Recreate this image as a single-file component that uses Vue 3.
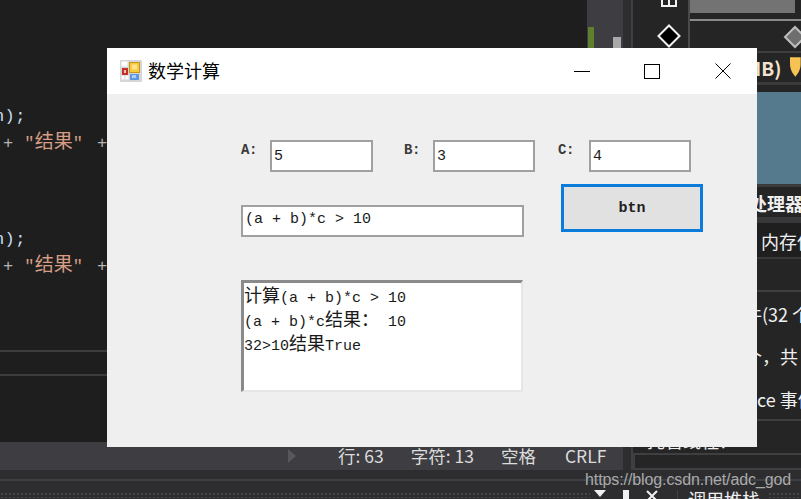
<script setup>
const codeLines = [
  { id: 1, kind: 'comma' },
  { id: 2 }, { id: 3 }, { id: 4 }, { id: 5 },
  { id: 6, kind: 'end' },
  { id: 7, kind: 'result' },
  { id: 8 }, { id: 9 }, { id: 10 },
  { id: 11, kind: 'end' },
  { id: 12, kind: 'result' }
]
const numbers = [
  { name: 'A:', value: '5', cls: 'field-a' },
  { name: 'B:', value: '3', cls: 'field-b' },
  { name: 'C:', value: '4', cls: 'field-c' }
]
</script>

<template>
  <div class="desktop">
    <div class="ide">
      <div class="work">
        <div class="center">
          <div class="upper">
            <div class="editor">
              <div class="code">
                <div v-for="line in codeLines" :key="line.id" class="code-line">
                  <template v-if="line.kind === 'comma'"><span class="punct first">        ,</span></template>
                  <template v-else-if="line.kind === 'end'"><span class="punct end">n);</span></template>
                  <template v-else-if="line.kind === 'result'"><span class="op">+ </span><span class="str">"<span class="str-cjk">结果</span>"</span><span class="op op-last"> +</span></template>
                </div>
              </div>
              <div class="panel-strip"></div>
            </div>
            <div class="scroll">
              <span class="mark-green"></span>
              <span class="mark-grey"></span>
            </div>
          </div>
          <div class="status">
            <svg class="status-arrow" width="8" height="14" viewBox="0 0 8 14"><path d="M0 0L8 7L0 14Z" fill="#58585c"/></svg>
            <span class="st st-line">行: 63</span>
            <span class="st st-char">字符: 13</span>
            <span class="st st-space">空格</span>
            <span class="st st-crlf">CRLF</span>
          </div>
        </div>
        <div class="gutter"></div>
        <div class="side">
          <div class="tool-row">
            <div class="tool-icons">
              <svg class="glyph-split" width="16" height="7" viewBox="0 0 16 7"><path d="M1 0V6H15V0M8 0V6" fill="none" stroke="#f2f2f2" stroke-width="2"/></svg>
              <svg class="glyph-diamond" width="24" height="24" viewBox="0 0 24 24"><path d="M12 1.500L22.500 12L12 22.500L1.500 12Z" fill="#000" stroke="#f2f2f2" stroke-width="2"/></svg>
            </div>
            <div class="tool-main">
              <div class="grey-bar"></div>
              <div class="grey-line"></div>
              <svg class="glyph-grey" width="24" height="24" viewBox="0 0 24 24"><path d="M12 2L22 12L12 22L2 12Z" fill="#6e6e6e" stroke="#bdbdbd" stroke-width="2"/></svg>
            </div>
          </div>
          <div class="row-mem">
            <span class="mem-text">MB)</span>
            <svg class="marker" width="11" height="20" viewBox="0 0 11 20"><path d="M0 0H11V7C11 13 8 17 5.500 20C3 17 0 13 0 7Z" fill="#f6c253"/></svg>
          </div>
          <div class="chart"></div>
          <div class="row-heading">处理器</div>
          <div class="row-tab">内存使用</div>
          <div class="row-blank"></div>
          <div class="events">
            <div class="ev ev-1">事件(32 个</div>
            <div class="ev ev-2">个，共</div>
            <div class="ev ev-3">ce 事件</div>
          </div>
          <div class="hidden-row">托管线程？</div>
          <div class="box-row"></div>
        </div>
      </div>
      <div class="bottom">
        <div class="grip"></div>
        <div class="pane-tools">
          <svg width="12" height="8" viewBox="0 0 12 8"><path d="M0 0H12L6 7Z" fill="#f0f0f0"/></svg>
          <svg width="10" height="14" viewBox="0 0 10 14"><path d="M2 0H8V9H10V10H0V9H2ZM4 10V14H6V10" fill="#f0f0f0"/></svg>
          <svg width="12" height="12" viewBox="0 0 12 12"><path d="M1 1L11 11M11 1L1 11" stroke="#f0f0f0" stroke-width="2"/></svg>
        </div>
        <div class="pane-tab">调用堆栈</div>
        <div class="grip grip-end"></div>
      </div>
    </div>

    <div class="window">
      <div class="titlebar">
        <svg class="app-icon" width="22" height="22" viewBox="0 0 22 22">
          <rect width="22" height="22" rx="1" fill="#d6d6d6"/>
          <rect x="1.500" y="1.500" width="6" height="5" fill="#fff"/>
          <rect x="1.500" y="15.500" width="3" height="4" fill="#fff"/>
          <rect x="5.500" y="15.500" width="3" height="4" fill="#fff"/>
          <rect x="2" y="8" width="6" height="7" fill="#c4302b"/>
          <rect x="4" y="10" width="2" height="3" fill="#f2c4b0"/>
          <rect x="9.500" y="2.500" width="10" height="10" fill="#f7c93c" stroke="#c39a1f"/>
          <rect x="12" y="4.500" width="5" height="5" fill="#fbe48d"/>
          <rect x="10" y="14" width="9" height="6" fill="#5f98e0"/>
          <rect x="12" y="15" width="4" height="3" fill="#a9cdf4"/>
        </svg>
        <span class="title">数学计算</span>
        <div class="win-buttons">
          <span class="win-btn win-min"><svg width="16" height="16" viewBox="0 0 16 16"><path d="M0 8.500H16" stroke="#000"/></svg></span>
          <span class="win-btn"><svg width="16" height="16" viewBox="0 0 16 16"><rect x="0.500" y="1.500" width="15" height="14" fill="none" stroke="#000"/></svg></span>
          <span class="win-btn"><svg width="16" height="16" viewBox="0 0 16 16"><path d="M0.500 0.500L15.500 15.500M15.500 0.500L0.500 15.500" stroke="#000"/></svg></span>
        </div>
      </div>
      <div class="client">
        <div class="number-row">
          <div v-for="n in numbers" :key="n.name" class="field" :class="n.cls">
            <label class="field-label">{{ n.name }}</label>
            <input class="box num" :value="n.value" readonly />
          </div>
        </div>
        <div class="form-body">
          <div class="form-left">
            <input class="box expr" value="(a + b)*c > 10" readonly />
            <div class="output">
              <div class="out-line"><span class="cjk">计算</span>(a + b)*c &gt; 10</div>
              <div class="out-line">(a + b)*c<span class="cjk">结果：</span> 10</div>
              <div class="out-line">32&gt;10<span class="cjk">结果</span>True</div>
            </div>
          </div>
          <button class="btn" type="button">btn</button>
        </div>
      </div>
    </div>

    <div class="watermark">https://blog.csdn.net/adc_god</div>
  </div>
</template>

<style>
html, body { margin: 0; background: #2d2d30; }
</style>

<style scoped>
.desktop {
  position: relative;
  width: 801px;
  height: 499px;
  overflow: hidden;
  background: #2d2d30;
  font-family: "Noto Sans CJK SC", "Noto Sans", sans-serif;
}
.ide { display: flex; flex-direction: column; height: 499px; }
.work { display: flex; height: 470px; }
.center { width: 623px; display: flex; flex-direction: column; }
.upper { display: flex; height: 442px; }
.editor { width: 587px; background: #1e1e1e; display: flex; flex-direction: column; }
.code {
  height: 350px;
  overflow: hidden;
  font-family: "Liberation Mono", monospace;
  font-size: 17px;
  letter-spacing: 0.4px;
  white-space: pre;
  padding-left: 3px;
  box-sizing: border-box;
}
.code-line { height: 24.6px; line-height: 24.6px; }
.code-line:first-child { margin-top: -16px; }
.first { margin-left: -5px; position: relative; top: -4px; }
.punct { color: #dcdcdc; }
.end { margin-left: -9px; color: #c8dce8; position: relative; top: -2px; }
.op { color: #b4b4b4; }
.op-last { margin-left: 3px; }
.str { color: #d69d85; }
.str-cjk { font-family: "Noto Sans CJK SC", sans-serif; font-size: 19px; line-height: 0; letter-spacing: 0; }
.panel-strip {
  height: 22px;
  border-top: 2px solid #3c3c3c;
  border-bottom: 2px solid #3c3c3c;
}
.scroll {
  width: 36px;
  background: #3e3e42;
  position: relative;
}
.mark-green { position: absolute; left: 1px; top: 27px; width: 6px; height: 21px; background: #5f7f2c; }
.mark-grey { position: absolute; left: 26px; top: 37px; width: 8px; height: 11px; background: #a8a8a8; }
.status {
  height: 28px;
  background: #3e3e42;
  display: flex;
  align-items: center;
  color: #dcdcdc;
  font-size: 17.5px;
  position: relative;
}
.status-arrow { margin-left: 288px; }
.st { white-space: nowrap; line-height: 28px; }
.st-line { margin-left: 42px; }
.st-char { margin-left: 27px; }
.st-space { margin-left: 27px; }
.st-crlf { margin-left: 29px; }
.gutter { background: #2d2d30; border-right: 2px solid #3f3f42; width: 8px; }
.side {
  width: 168px;
  background: #252526;
  display: flex;
  flex-direction: column;
  color: #f0f0f0;
  overflow: hidden;
}
.tool-row { display: flex; height: 52px; border-bottom: 2px solid #3f3f42; }
.tool-icons {
  width: 55px;
  border-right: 2px solid #4a4a4d;
  display: flex;
  flex-direction: column;
  align-items: center;
}
.glyph-split { margin-left: 16px; }
.glyph-diamond { margin-top: 17px; margin-left: 16px; }
.tool-main { flex: 1; position: relative; }
.grey-bar { height: 13px; width: 105px; background: #737373; }
.grey-line { height: 2px; margin-top: 6px; background: #8a8a8a; }
.glyph-grey { position: absolute; left: 93px; top: 25px; }
.row-mem {
  box-sizing: content-box;
  height: 28px;
  border-bottom: 3px solid #3a3a3d;
  display: flex;
  align-items: center;
  padding-left: 112px;
  padding-bottom: 1px;
  font-size: 19px;
  font-weight: 700;
  white-space: nowrap;
  color: #f0e4d0;
}
.marker { margin-left: 9px; }
.chart { height: 92px; margin-top: 7px; margin-left: 122px; background: #557a8d; flex: none; }
.row-heading {
  height: 30px;
  line-height: 32px;
  border-top: 3px solid #3a3a3d;
  padding-left: 116px;
  font-size: 18px;
  font-weight: 700;
  white-space: nowrap;
  flex: none;
}
.row-tab {
  height: 34px;
  line-height: 36px;
  border-top: 6px solid #38383a;
  border-bottom: 2px solid #38383a;
  padding-left: 128px;
  font-size: 18px;
  white-space: nowrap;
  flex: none;
  background: #1f1f20;
}
.row-blank { height: 31px; border-bottom: 2px solid #3f3f42; flex: none; }
.events {
  height: 127px;
  border-bottom: 2px solid #3f3f42;
  flex: none;
  font-size: 18px;
  white-space: nowrap;
}
.ev { height: 42px; line-height: 42px; }
.ev-1 { padding-left: 93px; margin-top: 1px; }
.ev-2 { padding-left: 111px; }
.ev-3 { padding-left: 124px; line-height: 45px; }
.hidden-row { height: 32px; line-height: 38px; padding-left: 14px; font-size: 18px; white-space: nowrap; flex: none; border-bottom: 2px solid #3f3f42; }
.box-row { height: 13px; border-bottom: 2px solid #3f3f42; border-left: 2px solid #3f3f42; flex: none; }
.bottom {
  height: 29px;
  background: #2d2d30;
  position: relative;
  display: flex;
  align-items: flex-end;
  overflow: hidden;
}
.bottom::before {
  content: "";
  position: absolute;
  left: 0;
  right: 0;
  top: 9px;
  height: 2px;
  background: #3f3f46;
}
.grip {
  width: 590px;
  height: 6px;
  margin-bottom: 1px;
  background-image: radial-gradient(#48484c 1px, transparent 1px);
  background-size: 4px 4px;
}
.pane-tools {
  width: 88px;
  height: 12px;
  display: flex;
  gap: 15px;
  align-items: flex-start;
  padding-left: 4px;
  box-sizing: border-box;
  border-right: 1px solid #3f3f46;
  margin-bottom: -3px;
}
.pane-tab {
  margin-left: 10px;
  color: #f0f0f0;
  font-size: 18px;
  line-height: 18px;
  margin-bottom: -9px;
  white-space: nowrap;
}
.grip-end { flex: 1; width: auto; margin-left: 8px; }

.window {
  position: absolute;
  left: 107px;
  top: 48px;
  width: 650px;
  height: 399px;
  background: #efefef;
  display: flex;
  flex-direction: column;
}
.titlebar {
  height: 46px;
  background: #fff;
  display: flex;
  align-items: center;
  padding-left: 13px;
  flex: none;
}
.title { margin-left: 6px; margin-bottom: 2px; font-size: 18px; color: #000; line-height: 44px; }
.win-buttons { margin-left: auto; margin-right: -1px; display: flex; }
.win-btn { width: 71px; height: 46px; display: flex; align-items: center; justify-content: center; }
.win-min svg { margin-left: 3px; }
.client { padding: 46px 0 0 134px; }
.number-row { display: flex; height: 32px; }
.field { display: flex; }
.field-label {
  font-family: "Liberation Mono", monospace;
  font-size: 14px;
  font-weight: 700;
  color: #3a3a3a;
  line-height: 21px;
  letter-spacing: -0.5px;
}
.field-a .field-label { width: 29px; }
.field-b { margin-left: 31px; }
.field-b .field-label { width: 29px; }
.field-c { margin-left: 23px; }
.field-c .field-label { width: 31px; }
.box {
  box-sizing: border-box;
  background: #fff;
  border: 2px solid #a0a0a0;
  border-radius: 0;
  padding: 0 0 0 2px;
  outline: none;
  margin: 0;
  font-family: "Liberation Mono", monospace;
  font-size: 15px;
  color: #1a1a1a;
}
.num { width: 102px; height: 32px; }
.field-a .num { width: 103px; }
.form-body { display: flex; align-items: flex-start; margin-top: 12px; }
.form-left { width: 283px; padding-top: 21px; }
.expr { width: 283px; height: 32px; display: block; padding-bottom: 3px; }
.output {
  box-sizing: border-box;
  width: 282px;
  height: 112px;
  margin-top: 43px;
  background: #fff;
  border-top: 3px solid #8a8a8a;
  border-left: 3px solid #8a8a8a;
  border-right: 2px solid #e6e6e6;
  border-bottom: 2px solid #e6e6e6;
  padding-top: 4px;
  font-family: "Liberation Mono", monospace;
  font-size: 15px;
  color: #1a1a1a;
}
.out-line { height: 24px; line-height: 24px; white-space: pre; }
.cjk { font-family: "Noto Sans CJK SC", sans-serif; font-size: 18px; line-height: 0; }
.btn {
  width: 142px;
  height: 48px;
  margin-left: 37px;
  box-sizing: border-box;
  border: 3px solid #0a7ddc;
  background: #e1e1e1;
  padding: 1px 0 0;
  font-family: "Liberation Mono", monospace;
  font-size: 15px;
  font-weight: 700;
  color: #222;
}
.watermark {
  position: absolute;
  left: 585px;
  top: 470px;
  font-family: "Liberation Sans", sans-serif;
  font-size: 16px;
  letter-spacing: -0.1px;
  line-height: 20px;
  color: #aaa;
  white-space: nowrap;
}
</style>
